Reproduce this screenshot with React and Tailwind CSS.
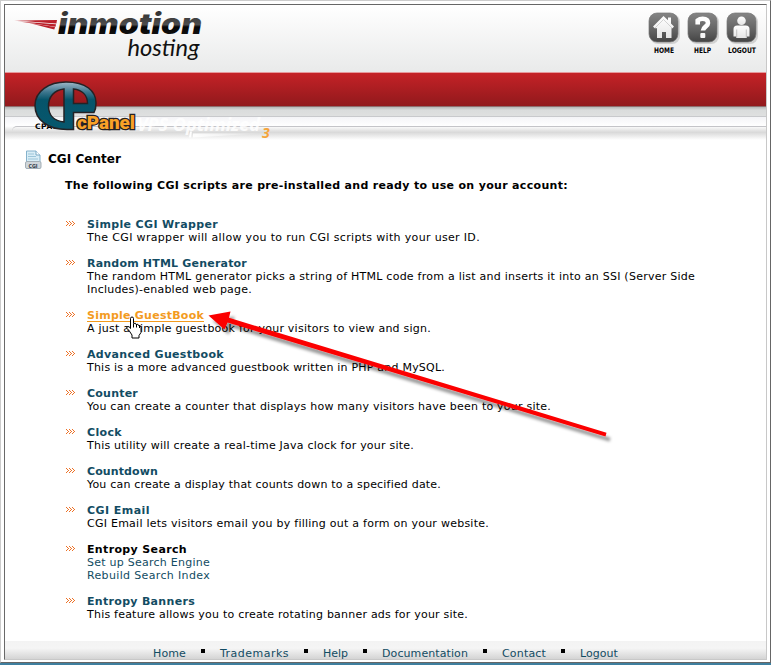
import { useLayoutEffect, useRef } from 'react';

const ITEMS = [
  { title: 'Simple CGI Wrapper', w: 131, lines: [['The CGI wrapper will allow you to run CGI scripts with your user ID.', 393]] },
  {
    title: 'Random HTML Generator', w: 160,
    lines: [
      ['The random HTML generator picks a string of HTML code from a list and inserts it into an SSI (Server Side', 608],
      ['Includes)-enabled web page.', 165],
    ],
  },
  { title: 'Simple GuestBook', w: 117, active: true, lines: [['A just a simple guestbook for your visitors to view and sign.', 344]] },
  { title: 'Advanced Guestbook', w: 137, lines: [['This is a more advanced guestbook written in PHP and MySQL.', 358]] },
  { title: 'Counter', w: 51, lines: [['You can create a counter that displays how many visitors have been to your site.', 464]] },
  { title: 'Clock', w: 35, lines: [['This utility will create a real-time Java clock for your site.', 327]] },
  { title: 'Countdown', w: 71, lines: [['You can create a display that counts down to a specified date.', 354]] },
  { title: 'CGI Email', w: 63, lines: [['CGI Email lets visitors email you by filling out a form on your website.', 402]] },
  { title: 'Entropy Search', w: 100, plain: true, links: true, lines: [['Set up Search Engine', 123], ['Rebuild Search Index', 123]] },
  { title: 'Entropy Banners', w: 108, lines: [['This feature allows you to create rotating banner ads for your site.', 381]] },
];

const FOOTER = [['Home', 33, 153], ['Trademarks', 69, 220], ['Help', 25, 323], ['Documentation', 86, 382], ['Contact', 44, 502], ['Logout', 38, 580]];

// One line of text whose tracking is adjusted to a fixed measure
function Line({ children, w, className = '' }) {
  const ref = useRef(null);
  useLayoutEffect(() => {
    const el = ref.current;
    el.style.letterSpacing = '0px';
    const natural = el.getBoundingClientRect().width;
    el.style.letterSpacing = `${(w - natural) / children.length}px`;
  }, [children, w]);
  return (
    <div className={`h-[13px] leading-[13px] whitespace-nowrap ${className}`}>
      <span ref={ref} className="inline-block">{children}</span>
    </div>
  );
}

function Chevrons() {
  return (
    <svg width="10" height="5" className="mt-[3px] block" shapeRendering="crispEdges" fill="#ed7126">
      {[0, 3, 6].map((x) => (
        <path key={x} d={`M${x} 0h1v1h1v1h1v1h-1v1h-1v1h-1v-1h1v-1h1v-1h-1v-1h-1z`} />
      ))}
    </svg>
  );
}

function NavIcon({ label, kind, w }) {
  return (
    <div className="flex w-[39px] flex-col items-center">
      <svg width="34" height="34" viewBox="0 0 34 34" className="block">
        <defs>
          <linearGradient id={`g${kind}`} x1="0" y1="0" x2="0" y2="1">
            <stop offset="0" stopColor="#858585" />
            <stop offset=".6" stopColor="#626262" />
            <stop offset="1" stopColor="#444" />
          </linearGradient>
          <linearGradient id={`w${kind}`} x1="0" y1="0" x2="0" y2="1">
            <stop offset="0" stopColor="#fff" />
            <stop offset="1" stopColor="#e6e6e6" />
          </linearGradient>
        </defs>
        <rect x="3" y="3" width="30" height="30" rx="8" fill="#bbb" opacity=".6" />
        <rect x="2" y="2" width="29" height="29" rx="8" fill={`url(#g${kind})`} stroke="#777" strokeWidth=".7" />
        {kind === 'home' && (
          <g fill="url(#whome)">
            <path d="M16.500 5 6 15.500l1.700 1.700h2.300V27h5v-6h4v6h5.500V17.200h1l1.500-1.700-3-3V6.500h-3v2.700z" />
            <path d="M8 17 16.500 8.500l8.500 8.500" fill="none" stroke="#aaa" strokeWidth=".5" />
          </g>
        )}
        {kind === 'help' && (
          <g>
            <path d="M11.700 13.500V9.500q2-1.800 5-1.800 5.300 0 5.300 4.300c0 3.700-4.800 3.600-5 7.500" fill="none" stroke="#fff" strokeWidth="4.600" />
            <rect x="14.300" y="22" width="5" height="5" rx="1" fill="#f5f5f5" />
          </g>
        )}
        {kind === 'user' && (
          <g fill="url(#wuser)">
            <circle cx="16.500" cy="9.700" r="4.300" />
            <path d="M12.200 14.500h8.600q3.700 0 3.700 3.500v7.500h-2.700V27h-10.600v-1.500H8.500V18q0-3.500 3.700-3.500z" />
            <path d="M11.700 18.500v8M21.300 18.500v8" stroke="#aaa" strokeWidth=".7" />
          </g>
        )}
      </svg>
      <svg width={w} height="8" className="mt-[1px] block overflow-visible">
        <text x="0" y="7" textLength={w} lengthAdjust="spacingAndGlyphs" className="fill-black text-[7.500px] font-bold [font-family:'DejaVu_Sans',sans-serif]">{label}</text>
      </svg>
    </div>
  );
}

function Brand() {
  return (
    <svg width="210" height="67" viewBox="5 5 210 67" className="block">
      <defs>
        <linearGradient id="ink" gradientUnits="userSpaceOnUse" x1="0" y1="12" x2="0" y2="35">
          <stop offset="0" stopColor="#333" />
          <stop offset=".55" stopColor="#4c4c4c" />
          <stop offset=".65" stopColor="#050505" />
          <stop offset="1" stopColor="#111" />
        </linearGradient>
        <linearGradient id="wing" x1="0" x2="1">
          <stop offset="0" stopColor="#b91c25" stopOpacity=".5" />
          <stop offset=".5" stopColor="#bb202a" />
        </linearGradient>
      </defs>
      <path d="M14 20.500 57 20l-.6 3.600z" fill="url(#wing)" />
      <path d="M17 21.300 56 24.300l-.4 2.500z" fill="url(#wing)" />
      <path d="m29 23 26 4-.7 2.400z" fill="url(#wing)" />
      <text x="58" y="34" textLength="144" lengthAdjust="spacingAndGlyphs" fill="url(#ink)" className="text-[28px] font-black italic [font-family:Inter,sans-serif]">inmotion</text>
      <text x="127.500" y="55.500" textLength="72" lengthAdjust="spacingAndGlyphs" fill="#111" className="text-[24px] italic [font-family:Lato,sans-serif]">hosting</text>
    </svg>
  );
}

function PanelLogo() {
  return (
    <svg width="250" height="64" viewBox="30 78 250 64" className="absolute left-[25px] top-[73px]">
      <defs>
        <linearGradient id="teal" gradientUnits="userSpaceOnUse" x1="0" y1="81" x2="0" y2="130">
          <stop offset="0" stopColor="#a9bfce" />
          <stop offset=".22" stopColor="#40788f" />
          <stop offset=".38" stopColor="#06546a" />
          <stop offset="1" stopColor="#07576d" />
        </linearGradient>
        <linearGradient id="swoosh" x1="0" x2="1">
          <stop offset="0" stopColor="#fff" />
          <stop offset="1" stopColor="#fff" stopOpacity="0" />
        </linearGradient>
      </defs>
      <text x="35" y="129" textLength="24" className="fill-black text-[7.500px] font-bold [font-family:'DejaVu_Sans',sans-serif]">CPAN</text>
      <path fillRule="evenodd" fill="url(#teal)" stroke="#242225" strokeWidth="1.500" d="M73.500 129.500H67C48 129.500 35 120 35 105.500C35 91 49 82 66 82C86 82 96 91 96 103Q96 109 94 112.500H73.500ZM64 89C54 90 48.500 97 48.500 106C48.500 115 54 121 64 122ZM73.500 89V103.500H87.500C87.500 95 82 90 73.500 89Z" />
      <text x="77" y="129.300" textLength="58" lengthAdjust="spacingAndGlyphs" fill="#f9a127" stroke="#242225" strokeWidth="2.600" paintOrder="stroke" className="text-[18px] font-black [font-family:Roboto,sans-serif]">cPanel</text>
      <text x="137" y="130.500" textLength="123" lengthAdjust="spacingAndGlyphs" fill="#fff" fillOpacity=".85" className="text-[17px] font-bold italic [font-family:'Open_Sans',sans-serif]">VPS Optimized</text>
      <path d="M190 131.500h2l-1 6h-2zM193 133.500h67l-67 4z" fill="url(#swoosh)" />
      <text x="262" y="138" fill="#f5a43a" className="text-[14px] font-bold italic [font-family:'Open_Sans',sans-serif]">3</text>
    </svg>
  );
}

function PageIcon() {
  return (
    <svg width="17" height="20" viewBox="0 0 17 20" className="block">
      <path d="M1.500 1h9.500l4 4v13.500H1.500z" fill="#d8edf6" stroke="#85b2cc" />
      <path d="M11 1v4h4" fill="#fff" stroke="#79a9c5" />
      <path d="M3 4h6M3 6.500h8M3 9h10" stroke="#9cc5d9" />
      <rect x=".5" y="11.500" width="15.500" height="7" rx="1.500" fill="#d0d6da" stroke="#a3afb7" />
      <text x="3.500" y="17.500" textLength="9" lengthAdjust="spacingAndGlyphs" className="fill-[#34404a] text-[5.500px] font-bold [font-family:'DejaVu_Sans',sans-serif]">CGI</text>
    </svg>
  );
}

function Annotations() {
  return (
    <svg width="771" height="665" className="pointer-events-none absolute left-0 top-0">
      <defs>
        <filter id="soft" x="-10%" y="-10%" width="120%" height="130%">
          <feDropShadow dx="4" dy="5" stdDeviation="1.800" floodColor="#000" floodOpacity=".4" />
        </filter>
      </defs>
      <path filter="url(#soft)" fill="#fb0505" d="M208.500 315.500 230.500 311.500 229 317.800 606.500 432.700 605.500 436.500 227.500 322.500 224.500 329.500Z" />
      <path transform="translate(128 316)" fill="#fff" stroke="#000" strokeWidth="1" d="M2.500 2.500q0-1.500 1.500-1.500t1.500 1.500v5q2.500-1 2.500 1 2.500-1 2.500 1 2.500-.5 2.500 2v5l-2 3v2.500H4V19L1 14.500l-2-2q-1-2 1-2t2.500 2z" />
      <path d="M133.500 324v3.500m3-2.500v2.500m3-2v2.500" stroke="#000" />
    </svg>
  );
}

export default function App() {
  return (
    <div className="relative flex h-[665px] w-[771px] flex-col bg-[#3f7f9f] pb-[2px] text-[11px] text-black [font-family:'DejaVu_Sans',Verdana,sans-serif]">
      <div className="h-[663px] border-b border-l border-r border-t border-b-[#666] border-l-[#ccc] border-r-[#666] border-t-[#ccc] bg-white pl-[3px] pr-[3px] pt-[3px]">
        <div className="relative flex h-[656px] w-[763px] flex-col border border-b-[#c8c8c8] border-l-[#696969] border-r-[#c8c8c8] border-t-[#666] bg-white">
          <header className="flex h-[67px] justify-between bg-linear-to-b from-white to-[#e9eaea]">
            <Brand />
            <nav className="flex pr-[5px] pt-[6px]">
              <NavIcon label="HOME" kind="home" w={20} />
              <NavIcon label="HELP" kind="help" w={17} />
              <NavIcon label="LOGOUT" kind="user" w={28} />
            </nav>
          </header>
          <div className="h-px shrink-0 bg-[#e6999c]" />
          <div className="h-[33px] bg-linear-to-b from-[#c52227] to-[#91191c]" />
          <div className="h-px shrink-0 bg-[#8d6e6e]" />
          <div className="h-[9px] bg-linear-to-b from-[#b5b7b7] via-[#dadcdc] via-35% to-[#dfe0e0]" />
          <div className="h-px shrink-0 bg-[#c8c9cc]" />
          <div className="h-[9px] bg-linear-to-b from-[#f4f4f7] to-white" />
          <div className="bg-linear-to-b from-white via-[#d9d9d9] via-45% to-white">
            <div className="ml-[7px] h-[14px] rounded-tl-[5px] border-t border-[#c4c4c8]" />
          </div>
          <PanelLogo />
          <main className="flex flex-col pl-[20px] pt-[10px]">
            <div className="flex items-start gap-[6px]">
              <PageIcon />
              <Line w={73} className="mt-[3px] text-[12px] font-bold">CGI Center</Line>
            </div>
            <Line w={503} className="ml-[40px] mt-[9px] font-bold">The following CGI scripts are pre-installed and ready to use on your account:</Line>
            <ul className="ml-[41px] mt-[26px] flex flex-col gap-[13px]">
              {ITEMS.map((it) => (
                <li key={it.title} className="flex gap-[11px]">
                  <Chevrons />
                  <div>
                    <div style={{ width: it.w }} className={it.active ? 'relative text-[#f39b1e]' : it.plain ? 'text-black' : 'text-[#124c63]'}>
                      <Line w={it.w} className="font-bold">{it.title}</Line>
                      {it.active && <div className="absolute bottom-0 left-0 h-px w-full bg-[#f39b1e]" />}
                    </div>
                    {it.lines.map(([t, w]) => (
                      <Line key={t} w={w} className={it.links ? 'text-[#124c63]' : 'text-black'}>{t}</Line>
                    ))}
                  </div>
                </li>
              ))}
            </ul>
          </main>
          <footer className="mt-auto flex h-[18px] items-start bg-linear-to-b from-[#f3f3f3] via-[#f5f5f5] via-40% to-[#d4d4d4] pl-[148px] pt-[6px] text-[#124c63]">
            {FOOTER.map(([t, w, x], i) => {
              const next = FOOTER[i + 1];
              return (
                <div key={t} className="flex items-center" style={{ width: next ? next[2] - x : w }}>
                  <Line w={w}>{t}</Line>
                  {next && <div className="mx-auto mb-[5px] h-1 w-1 bg-black" />}
                </div>
              );
            })}
          </footer>
        </div>
      </div>
      <Annotations />
    </div>
  );
}
